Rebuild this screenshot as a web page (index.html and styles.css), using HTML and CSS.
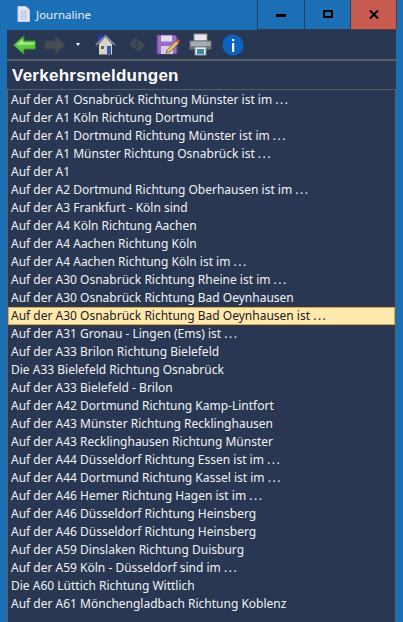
FILE: index.html
```html
<!DOCTYPE html>
<html lang="en">
<head>
    <meta charset="UTF-8">
    <title>Journaline</title>
    <link rel="stylesheet" href="styles.css">
</head>
<body>
    <div class="window">
        <div class="titlebar">
            <svg class="app-icon" width="13" height="16" viewBox="0 0 13 16">
                <path d="M1 .5h8l3.500 3.500v11.500h-11.500z" fill="#e4e8fa" stroke="#c3cbe8"/>
                <path d="M3 5h7M3 7h7M3 9h7M3 11h7M3 13h7" stroke="#b4bde0"/>
            </svg>
            <span class="app-title">Journaline</span>
            <div class="win-buttons">
                <div class="win-btn"><span class="min-glyph"></span></div>
                <div class="win-btn win-btn-max"><span class="max-glyph"></span></div>
                <div class="win-btn win-btn-close">
                    <svg width="10" height="9" viewBox="0 0 10 9"><path d="M1 .5l8 8M9 .5l-8 8" stroke="#000" stroke-width="2"/></svg>
                </div>
            </div>
        </div>

        <div class="content">
            <div class="toolbar">
                <svg class="tool back" width="23" height="20" viewBox="0 0 23 20">
                    <path d="M.7 10l10-9v5h11.500v8h-11.500v5z" fill="#5cc83c" stroke="#3f9a30"/>
                    <path d="M3.500 10l6.500-6v3.500h11.500v2z" fill="#a8ec88"/>
                </svg>
                <svg class="tool forward" width="22" height="20" viewBox="0 0 22 20">
                    <path d="M21.300 10l-10-9v5h-10.500v8h10.500v5z" fill="#454c55" stroke="#3c434f"/>
                </svg>
                <span class="dropdown"></span>
                <svg class="tool home" width="21" height="20" viewBox="0 0 21 20">
                    <path d="M3 0h4v4l-4 4z" fill="#2a3fb0"/>
                    <path d="M4 9l6.500-7 6.500 7v10.500h-13z" fill="#d9d4c4"/>
                    <path d="M1 10l9.500-9 9.500 9" fill="none" stroke="#8c94b8" stroke-width="1.600"/>
                    <rect x="6" y="11" width="3" height="3" fill="#5a6270"/>
                    <rect x="12" y="11" width="4" height="8.500" fill="#2a5cae"/>
                </svg>
                <svg class="tool sync" width="18" height="17" viewBox="0 0 18 17">
                    <path d="M1 8l6-7 3 3-3 4h3l-3 5z" fill="#434a54"/>
                    <path d="M17 9l-6 7-3-3 3-4h-3l3-5z" fill="#434a54"/>
                </svg>
                <svg class="tool save" width="25" height="21" viewBox="0 0 25 21">
                    <path d="M1 1h18l2 2v17h-20z" fill="#9a6cc4" stroke="#5c4080"/>
                    <rect x="5" y="1.500" width="11" height="6" fill="#e4dcec"/>
                    <rect x="5" y="12" width="12" height="8" fill="#d6cce6"/>
                    <path d="M11 16l9-9 3 2-9 9-4 1z" fill="#e8c060" stroke="#6a5030" stroke-width=".7"/>
                    <path d="M20 7l2-2 2 2-1 2z" fill="#d05050"/>
                </svg>
                <svg class="tool printer" width="23" height="23" viewBox="0 0 23 23">
                    <rect x="5" y="1" width="13" height="7" fill="#e8e8ec" stroke="#8a8e96"/>
                    <rect x="1" y="8" width="21" height="8" fill="#a8acb4" stroke="#6a6e76"/>
                    <rect x="1" y="13" width="21" height="3" fill="#70747c"/>
                    <rect x="18" y="10" width="2" height="2" fill="#58d058"/>
                    <rect x="6" y="14" width="11" height="8" fill="#eef0f2" stroke="#8a8e96"/>
                    <rect x="8" y="16" width="7" height="5" fill="#3a8aa0"/>
                </svg>
                <svg class="tool info" width="22" height="22" viewBox="0 0 22 22">
                    <circle cx="11" cy="11" r="10.500" fill="#0a64c0"/>
                    <rect x="10" y="9" width="2.200" height="9" fill="#fff"/>
                    <rect x="10" y="5" width="2.200" height="2.200" fill="#fff"/>
                </svg>
            </div>
            <div class="heading">Verkehrsmeldungen</div>
            <div class="list">
                <div class="row">Auf der A1 Osnabrück Richtung Münster ist im <span class="more">...</span></div>
                <div class="row">Auf der A1 Köln Richtung Dortmund</div>
                <div class="row">Auf der A1 Dortmund Richtung Münster ist im <span class="more">...</span></div>
                <div class="row">Auf der A1 Münster Richtung Osnabrück ist <span class="more">...</span></div>
                <div class="row">Auf der A1</div>
                <div class="row">Auf der A2 Dortmund Richtung Oberhausen ist im <span class="more">...</span></div>
                <div class="row">Auf der A3 Frankfurt - Köln sind</div>
                <div class="row">Auf der A4 Köln Richtung Aachen</div>
                <div class="row">Auf der A4 Aachen Richtung Köln</div>
                <div class="row">Auf der A4 Aachen Richtung Köln ist im <span class="more">...</span></div>
                <div class="row">Auf der A30 Osnabrück Richtung Rheine ist im <span class="more">...</span></div>
                <div class="row">Auf der A30 Osnabrück Richtung Bad Oeynhausen</div>
                <div class="row selected">Auf der A30 Osnabrück Richtung Bad Oeynhausen ist <span class="more">...</span></div>
                <div class="row">Auf der A31 Gronau - Lingen (Ems) ist <span class="more">...</span></div>
                <div class="row">Auf der A33 Brilon Richtung Bielefeld</div>
                <div class="row">Die A33 Bielefeld Richtung Osnabrück</div>
                <div class="row">Auf der A33 Bielefeld - Brilon</div>
                <div class="row">Auf der A42 Dortmund Richtung Kamp-Lintfort</div>
                <div class="row">Auf der A43 Münster Richtung Recklinghausen</div>
                <div class="row">Auf der A43 Recklinghausen Richtung Münster</div>
                <div class="row">Auf der A44 Düsseldorf Richtung Essen ist im <span class="more">...</span></div>
                <div class="row">Auf der A44 Dortmund Richtung Kassel ist im <span class="more">...</span></div>
                <div class="row">Auf der A46 Hemer Richtung Hagen ist im <span class="more">...</span></div>
                <div class="row">Auf der A46 Düsseldorf Richtung Heinsberg</div>
                <div class="row">Auf der A46 Düsseldorf Richtung Heinsberg</div>
                <div class="row">Auf der A59 Dinslaken Richtung Duisburg</div>
                <div class="row">Auf der A59 Köln - Düsseldorf sind im <span class="more">...</span></div>
                <div class="row">Die A60 Lüttich Richtung Wittlich</div>
                <div class="row">Auf der A61 Mönchengladbach Richtung Koblenz</div>
            </div>
        </div>
    </div>
</body>
</html>
```

FILE: styles.css
```css
* {
    box-sizing: border-box;
}
html, body {
    margin: 0;
    height: 100%;
    overflow: hidden;
}
body {
    font-family: "Noto Sans", Arial, sans-serif;
    background-color: #1a6fb5;
}
.window {
    width: 403px;
    height: 622px;
    display: flex;
    flex-direction: column;
}
.titlebar {
    height: 30px;
    display: flex;
    align-items: flex-start;
    color: #e8f0f8;
}
.app-icon {
    margin: 6px 0 0 17px;
}
.app-title {
    margin: 6px 0 0 6px;
    font-size: 11.5px;
    line-height: 18px;
}
.win-buttons {
    margin-left: auto;
    margin-right: 6px;
    display: flex;
}
.win-btn {
    width: 47px;
    height: 30px;
    background-color: #1a6fb5;
    border: 1px solid #2b3a55;
    border-top: 0;
    border-right: 0;
    display: flex;
    align-items: center;
    justify-content: center;
}
.win-btn-max {
    width: 46px;
}
.win-btn-close {
    width: 47px;
    background-color: #c75b4f;
    border-right: 1px solid #5a3a45;
    border-bottom-color: #5a3a45;
}
.min-glyph {
    width: 10px;
    height: 3px;
    background-color: #000;
    margin-top: 2px;
}
.max-glyph {
    width: 10px;
    height: 8px;
    border: 2px solid #000;
    margin-top: -2px;
}
.content {
    flex: 1;
    margin: 0 7px;
    background-color: #293752;
    min-height: 0;
}
.toolbar {
    height: 31px;
    display: flex;
    align-items: center;
    border-bottom: 2px solid #5c5f66;
    padding-left: 6px;
}
.tool {
    flex: none;
}
.forward {
    margin-left: 8px;
}
.dropdown {
    margin-left: 10px;
    width: 0;
    height: 0;
    border-left: 2px solid transparent;
    border-right: 2px solid transparent;
    border-top: 3px solid #fff;
}
.home {
    margin-left: 15px;
}
.sync {
    margin-left: 12px;
}
.save {
    margin-left: 10px;
}
.printer {
    margin-left: 8px;
}
.info {
    margin-left: 10px;
}
.heading {
    height: 28px;
    padding: 3px 0 0 5px;
    color: #fff;
    font-family: "Liberation Sans", Arial, sans-serif;
    font-weight: bold;
    font-size: 17px;
    letter-spacing: .25px;
    line-height: 24px;
}
.list {
    border: 1px solid #5c5f66;
    border-bottom: 0;
    padding-top: 1px;
    overflow: hidden;
    height: 533px;
}
.row {
    height: 18px;
    padding-left: 3px;
    color: #f0f2f6;
    font-size: 12px;
    line-height: 18px;
    white-space: nowrap;
}
.more {
    letter-spacing: 1.5px;
}
.selected {
    background-color: #ffe9ac;
    border: 1px solid #e0a84a;
    color: #1a1a28;
    padding-left: 2px;
    line-height: 16px;
}
```
